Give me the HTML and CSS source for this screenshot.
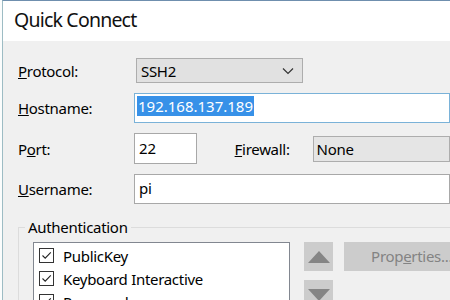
FILE: index.html
```html
<!DOCTYPE html>
<html>
<head>
<meta charset="utf-8">
<link rel="stylesheet" href="styles.css">
</head>
<body>
<div class="window">
  <div class="titlebar">Quick Connect</div>
  <div class="content">
    <div class="row row-protocol">
      <label class="lbl"><u>P</u>rotocol:</label>
      <div class="combo combo-protocol">
        <span>SSH2</span>
        <svg class="chev" width="12" height="8" viewBox="0 0 12 8"><path d="M1 1.5 L6 6.5 L11 1.5" fill="none" stroke="#333" stroke-width="1.2"/></svg>
      </div>
    </div>
    <div class="row row-host">
      <label class="lbl"><u>H</u>ostname:</label>
      <div class="input input-host focused"><span class="sel">192.168.137.189</span></div>
    </div>
    <div class="row row-port">
      <label class="lbl">P<u>o</u>rt:</label>
      <div class="input input-port">22</div>
      <label class="lbl lbl-fw"><u>F</u>irewall:</label>
      <div class="combo combo-fw"><span>None</span></div>
    </div>
    <div class="row row-user">
      <label class="lbl"><u>U</u>sername:</label>
      <div class="input input-user">pi</div>
    </div>
    <div class="group">
      <div class="legend">Authentication</div>
      <div class="group-body">
        <div class="listbox">
          <div class="item"><span class="cb"><svg width="13" height="13" viewBox="0 0 13 13"><path d="M2.5 6.5 L5.2 9.2 L10.8 3.3" fill="none" stroke="#222" stroke-width="1.1"/></svg></span>PublicKey</div>
          <div class="item"><span class="cb"><svg width="13" height="13" viewBox="0 0 13 13"><path d="M2.5 6.5 L5.2 9.2 L10.8 3.3" fill="none" stroke="#222" stroke-width="1.1"/></svg></span>Keyboard Interactive</div>
          <div class="item"><span class="cb"><svg width="13" height="13" viewBox="0 0 13 13"><path d="M2.5 6.5 L5.2 9.2 L10.8 3.3" fill="none" stroke="#222" stroke-width="1.1"/></svg></span>Password</div>
        </div>
        <div class="arrows">
          <div class="abtn"><svg width="22" height="12" viewBox="0 0 22 12"><path d="M11 0 L22 12 L0 12 Z" fill="#858585"/></svg></div>
          <div class="abtn"><svg width="22" height="12" viewBox="0 0 22 12"><path d="M0 0 L22 0 L11 12 Z" fill="#858585"/></svg></div>
        </div>
        <div class="props">Prop<u>e</u>rties...</div>
      </div>
    </div>
  </div>
</div>
</body>
</html>
```
FILE: styles.css
```css
html, body {
  margin: 0;
  padding: 0;
  width: 450px;
  height: 300px;
  overflow: hidden;
  background: #fbfdfd;
}
body {
  font-family: "Noto Sans", "Open Sans", sans-serif;
  font-size: 15px;
  letter-spacing: -0.3px;
  color: #000;
}
.window {
  margin-left: 2px;
  border-left: 1px solid #9dbcc4;
  border-top: 1px solid #6f8fae;
  height: 299px;
  background: #f0f0f0;
  overflow: hidden;
}
.titlebar {
  height: 40px;
  background: #fff;
  padding-left: 11px;
  font-size: 19.5px;
  letter-spacing: -0.8px;
  line-height: 38px;
  color: #111;
}
.content {
  padding-left: 15px;
}
.row {
  display: flex;
  align-items: center;
  height: 25px;
}
.lbl {
  width: 116px;
  flex: none;
  line-height: 20px;
}
.row-protocol { margin-top: 17px; }
.row-host { margin-top: 10px; height: 30px; }
.row-port { margin-top: 10px; height: 31px; }
.row-user { margin-top: 10px; height: 30px; }
.combo {
  box-sizing: border-box;
  height: 25px;
  background: #e1e1e1;
  border: 1px solid #adadad;
  display: flex;
  align-items: center;
  padding-left: 4px;
  position: relative;
}
.combo-protocol {
  margin-left: 2px;
  width: 167px;
}
.chev {
  position: absolute;
  right: 8px;
  top: 8px;
}
.input {
  box-sizing: border-box;
  height: 100%;
  background: #fff;
  border: 1px solid #a8a8a8;
  padding: 2px 0 0 4px;
  line-height: 20px;
}
.input-host {
  width: 330px;
  border-color: #7ab2d8;
  padding-left: 2px;
  letter-spacing: 0;
}
.sel {
  background: #3791e8;
  color: #fff;
  padding: 0 1px;
}
.input-port {
  width: 68px;
  padding-top: 4px;
  letter-spacing: 0;
}
.lbl-fw {
  width: 76px;
  margin-left: 38px;
}
.combo-fw {
  margin-left: 2px;
  width: 150px;
  height: 26px;
  background: #e5e5e5;
  padding-left: 3px;
}
.input-user {
  width: 330px;
  padding-top: 3px;
}
.group {
  margin-top: 23px;
  border: 1px solid #dcdcdc;
  width: 460px;
  height: 100px;
  position: relative;
}
.legend {
  position: absolute;
  top: -11px;
  left: 6px;
  padding: 0 3px;
  background: #f0f0f0;
  line-height: 20px;
}
.group-body {
  display: flex;
  align-items: flex-start;
  padding: 14px 0 0 14px;
}
.listbox {
  box-sizing: border-box;
  width: 262px;
  height: 80px;
  background: #fff;
  border: 1px solid #828790;
  padding: 1px 0 0 5px;
}
.item {
  display: flex;
  align-items: center;
  height: 23px;
  line-height: 20px;
}
.cb {
  box-sizing: border-box;
  width: 15px;
  height: 15px;
  border: 1px solid #333;
  background: #fff;
  margin-right: 9px;
  display: flex;
  align-items: center;
  justify-content: center;
}
.arrows {
  margin-left: 14px;
  display: flex;
  flex-direction: column;
  gap: 9px;
}
.abtn {
  width: 29px;
  height: 29px;
  background: #cccccc;
  display: flex;
  align-items: center;
  justify-content: center;
}
.props {
  margin-left: 11px;
  width: 110px;
  height: 29px;
  background: #cccccc;
  color: #838383;
  line-height: 29px;
  padding-left: 27px;
}
```
